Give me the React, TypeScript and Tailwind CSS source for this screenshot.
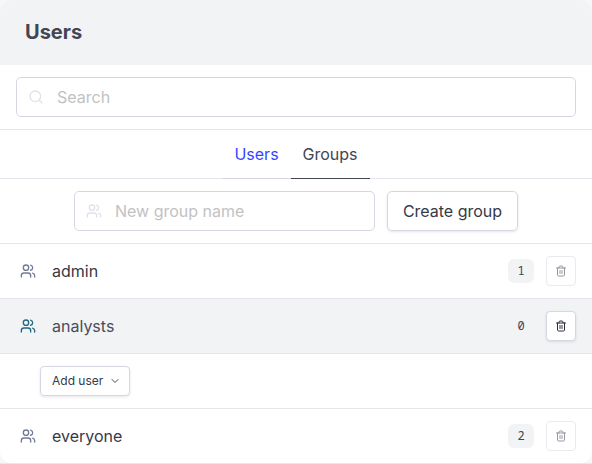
import React from 'react';

function UsersIcon({ className = '' }: { className?: string }) {
  return (
    <svg viewBox="0 0 24 24" className={`size-4 shrink-0 ${className}`} fill="none" stroke="currentColor" strokeWidth="2" strokeLinecap="round" strokeLinejoin="round">
      <path d="M16 21v-2a4 4 0 0 0-4-4H6a4 4 0 0 0-4 4v2" />
      <circle cx="9" cy="7" r="4" />
      <path d="M22 21v-2a4 4 0 0 0-3-3.87" />
      <path d="M16 3.13a4 4 0 0 1 0 7.75" />
    </svg>
  );
}

function SearchIcon() {
  return (
    <svg viewBox="0 0 24 24" className="size-4 shrink-0 text-[#e1e2ea]" fill="none" stroke="currentColor" strokeWidth="2" strokeLinecap="round" strokeLinejoin="round">
      <circle cx="11" cy="11" r="8" />
      <path d="m21 21-4.35-4.35" />
    </svg>
  );
}

function TrashIcon() {
  return (
    <svg viewBox="0 0 24 24" className="size-3 shrink-0" fill="none" stroke="currentColor" strokeWidth="2" strokeLinecap="round" strokeLinejoin="round">
      <path d="M3 6h18" />
      <path d="M19 6v14c0 1-1 2-2 2H7c-1 0-2-1-2-2V6" />
      <path d="M8 6V4c0-1 1-2 2-2h4c1 0 2 1 2 2v2" />
      <path d="M10 11v6M14 11v6" />
    </svg>
  );
}

function GroupRow({ name, count, selected = false, last = false }: { name: string; count: number; selected?: boolean; last?: boolean }) {
  return (
    <div className={`flex items-center pl-5 pr-4 ${last ? 'h-[54px]' : 'h-[55px] border-b border-[#e5e6eb]'} ${selected ? 'bg-[#f2f3f5]' : ''}`}>
      <UsersIcon className={selected ? 'text-[#256880]' : 'text-[#717b98]'} />
      <span className={`ml-4 flex-1 ${selected ? 'text-[#4a4c5c]' : 'text-[#363946]'}`}>{name}</span>
      <span className="mr-3 flex h-6 w-[26px] items-center justify-center rounded-md bg-[#f2f3f5] font-['Noto_Sans_Mono',monospace] text-xs text-[#414554]">{count}</span>
      <button
        aria-label="Delete group"
        className={`flex size-[30px] items-center justify-center rounded-[4px] border bg-white ${selected ? 'border-[#d5d7e2] text-[#2c303c] shadow-[0_1px_3px_rgba(0,0,0,0.1)]' : 'border-[#e9eaef] text-[#96989e]'}`}
      >
        <TrashIcon />
      </button>
    </div>
  );
}

export default function App() {
  return (
    <div className="h-[464px] w-[592px] overflow-hidden border-b border-[#e8e8ea] bg-[#f7f7f8] font-['Inter',sans-serif] text-base leading-6">
      <div className="h-[463px] overflow-hidden rounded-xl bg-white">
        <header className="flex h-[65px] items-center bg-[#f2f3f5] px-[25px] pb-0.5">
          <h1 className="text-xl font-bold leading-7 text-[#414554]">Users</h1>
        </header>
        <div className="h-[65px] border-b border-[#e5e6eb] px-4 pt-3">
          <div className="flex h-10 items-center rounded-[5px] border border-[#d5d7e2] pl-[11px]">
            <SearchIcon />
            <input placeholder="Search" className="ml-[13px] min-w-0 flex-1 outline-none placeholder:text-[#c2c2c4]" />
          </div>
        </div>
        <nav className="flex h-[49px] justify-center border-b border-[#e5e6eb]">
          <a className="-mb-px flex w-[69px] items-center justify-center border-b border-[#d5d7e2] text-[#3347ff]">Users</a>
          <a className="-mb-px flex w-[79px] items-center justify-center border-b border-[#414554] pr-px text-[#414554]">Groups</a>
        </nav>
        <div className="flex h-[65px] justify-center gap-3 border-b border-[#e5e6eb] pt-3">
          <div className="flex h-10 w-[301px] items-center rounded-[5px] border border-[#d5d7e2] pl-[11px]">
            <UsersIcon className="text-[#e1e2ea]" />
            <input placeholder="New group name" className="ml-[13px] min-w-0 flex-1 outline-none placeholder:text-[#c2c2c4]" />
          </div>
          <button className="h-10 w-[131px] rounded-[5px] border border-[#d5d7e2] text-[#363946] shadow-[0_1px_3px_rgba(0,0,0,0.1)]">Create group</button>
        </div>
        <GroupRow name="admin" count={1} />
        <GroupRow name="analysts" count={0} selected />
        <div className="flex h-[55px] items-center border-b border-[#e5e6eb] pl-10">
          <button className="flex h-[30px] w-[90px] items-center rounded-[4px] border border-[#d5d7e2] pl-[11px] text-xs text-[#363946] shadow-[0_1px_3px_rgba(0,0,0,0.1)]">
            Add user
            <svg viewBox="0 0 24 24" className="ml-[6px] size-3 text-[#4a4d59]" fill="none" stroke="currentColor" strokeWidth="2" strokeLinecap="round" strokeLinejoin="round">
              <path d="m6 9 6 6 6-6" />
            </svg>
          </button>
        </div>
        <GroupRow name="everyone" count={2} last />
      </div>
    </div>
  );
}
